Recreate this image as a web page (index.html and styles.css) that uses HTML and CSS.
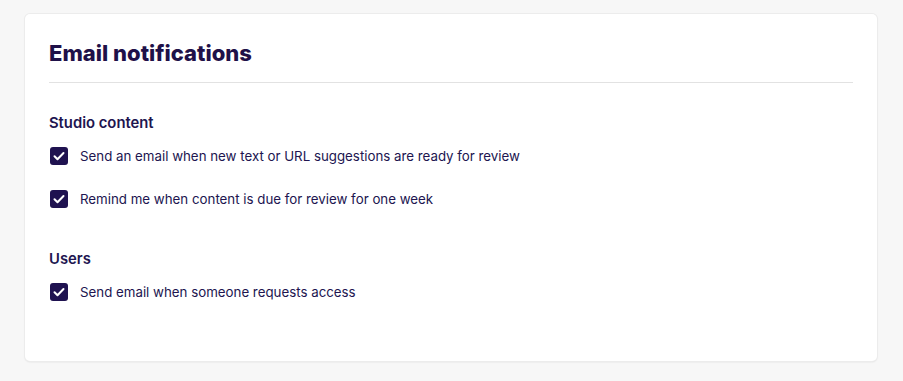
FILE: index.html
```html
<!DOCTYPE html>
<html>
<head>
	<title>Email notifications</title>
	<link rel="stylesheet" href="styles.css">
</head>
<body>
	<div class="card">
		<h1 class="card-title">Email notifications</h1>

		<section class="group">
			<h2 class="group-title">Studio content</h2>
			<label class="option">
				<span class="box"><svg viewBox="0 0 18 18" width="18" height="18"><path d="M4.5 9.2l3 3 6-6.2" fill="none" stroke="#fff" stroke-width="2" stroke-linecap="round" stroke-linejoin="round"/></svg></span>
				<span class="option-text">Send an email when new text or URL suggestions are ready for review</span>
			</label>
			<label class="option">
				<span class="box"><svg viewBox="0 0 18 18" width="18" height="18"><path d="M4.5 9.2l3 3 6-6.2" fill="none" stroke="#fff" stroke-width="2" stroke-linecap="round" stroke-linejoin="round"/></svg></span>
				<span class="option-text">Remind me when content is due for review for one week</span>
			</label>
		</section>

		<section class="group">
			<h2 class="group-title">Users</h2>
			<label class="option">
				<span class="box"><svg viewBox="0 0 18 18" width="18" height="18"><path d="M4.5 9.2l3 3 6-6.2" fill="none" stroke="#fff" stroke-width="2" stroke-linecap="round" stroke-linejoin="round"/></svg></span>
				<span class="option-text">Send email when someone requests access</span>
			</label>
		</section>
	</div>
</body>
</html>
```

FILE: styles.css
```css
html {
	background-color: #f7f7f7;
}
body {
	margin: 0;
	padding: 14px 26px 20px 25px;
	font-family: Inter, "Noto Sans", sans-serif;
	color: #211550;
}
.card {
	background-color: white;
	border-radius: 5px;
	box-shadow: 0 0 0 1px #ececec, 0 1px 2px rgba(0, 0, 0, 0.12);
	padding: 24px 24px 37px 24px;
	height: 286px;
}
.card-title {
	margin: 0;
	font-size: 22px;
	font-weight: 800;
	line-height: 30px;
	padding-bottom: 14px;
	border-bottom: 1px solid #e2e2e2;
	color: #1f1149;
}
.group {
	margin-top: 30px;
}
.group + .group {
	margin-top: 38px;
}
.group-title {
	margin: 0 0 11px 0;
	font-size: 14.8px;
	font-weight: 600;
	line-height: 20px;
}
.option {
	display: flex;
	align-items: center;
	gap: 12px;
	height: 24px;
	margin-bottom: 19px;
	font-size: 13.3px;
}
.box {
	display: flex;
	width: 18px;
	height: 18px;
	margin-left: 1px;
	border-radius: 3px;
	background-color: #1f1250;
}
```
